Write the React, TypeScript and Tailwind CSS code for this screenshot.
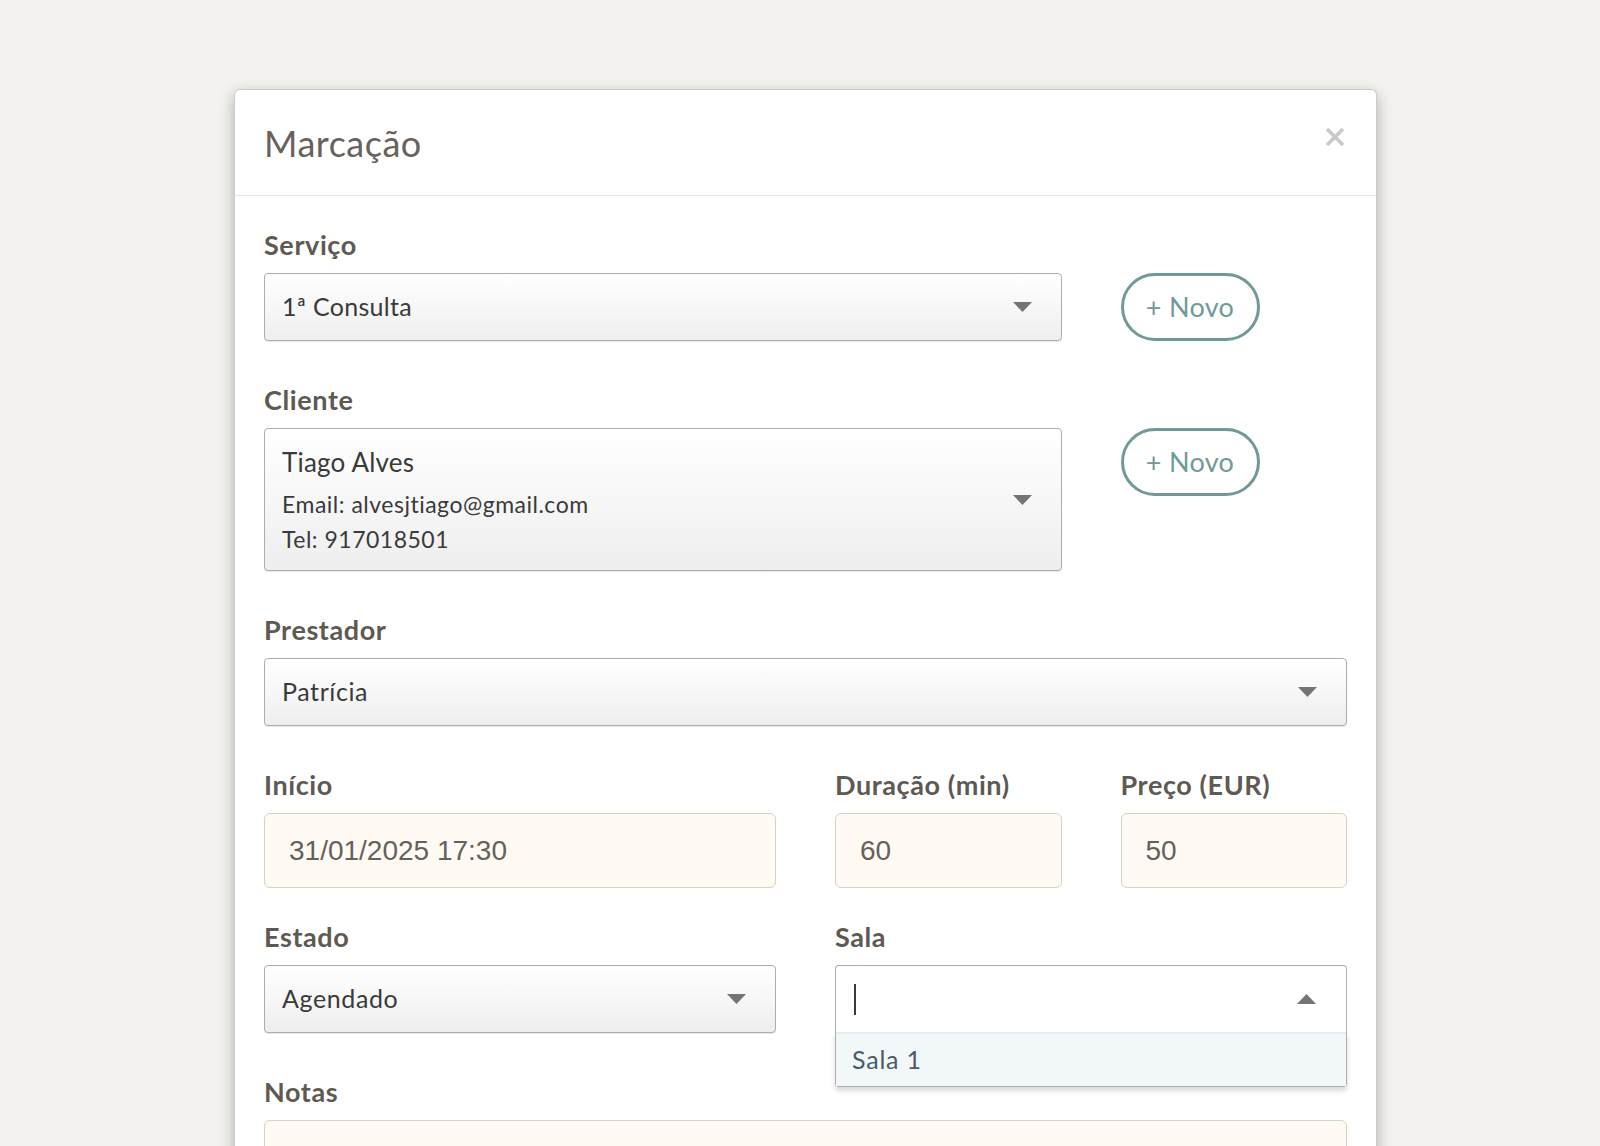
import React from "react";

function Caret({ up = false }: { up?: boolean }) {
  return (
    <svg width="19" height="10" viewBox="0 0 19 10" className="shrink-0">
      <path d={up ? "M0 10 L9.5 0 L19 10 Z" : "M0 0 L19 0 L9.5 10 Z"} fill="#747474" />
    </svg>
  );
}

function Label({ children }: { children: React.ReactNode }) {
  return (
    <div className="text-[27px] leading-[30px] font-bold tracking-[0.6px] text-[#5e5953] mb-[13px]">
      {children}
    </div>
  );
}

const selectCls =
  "flex items-center justify-between rounded-[4px] border border-[#adadad] bg-linear-to-b from-white via-[#f7f7f7] to-[#eeeeee] shadow-[0_1px_1px_rgba(0,0,0,0.1)] pl-[17px] pr-[29px] text-[#3a3a3a]";

const inputCls =
  "h-[75px] rounded-[6px] border border-[#d9d1c3] bg-[#fffbf4] pl-[24px] flex items-center text-[28px] text-[#66615b] font-['Liberation_Sans',Arial,sans-serif]";

function NovoButton() {
  return (
    <button className="h-[68px] w-[139px] rounded-full border-[3px] border-[#6f9a99] text-[#6f9a99] text-[27px] tracking-[0.3px] flex items-center justify-center bg-white">
      + Novo
    </button>
  );
}

export default function App() {
  return (
    <div className="h-[1146px] overflow-hidden bg-[#f3f2ee] pt-[89px] font-['Lato',sans-serif]">
      <div className="ml-[234px] w-[1143px] h-[1120px] bg-white border border-black/20 rounded-[6px] shadow-[0_5px_15px_rgba(0,0,0,0.28)]">
        {/* Header */}
        <div className="h-[106px] border-b border-[#e5e5e5] flex justify-between pl-[29px] pr-[31px]">
          <div className="self-center text-[36px] tracking-[0.5px] text-[#67625c]">Marcação</div>
          <svg width="20" height="20" viewBox="0 0 20 20" className="mt-[37px]">
            <path d="M2 2 L18 18 M18 2 L2 18" stroke="#c9c9c9" strokeWidth="3.6" strokeLinecap="butt" />
          </svg>
        </div>

        {/* Body */}
        <div className="px-[29px] pt-[34px]">
          {/* Serviço */}
          <div className="grid grid-cols-4 gap-x-[59px] mb-[44px]">
            <div className="col-span-3">
              <Label>Serviço</Label>
              <div className={selectCls + " h-[68px] text-[25px] tracking-[0.3px]"}>
                <span>1ª Consulta</span>
                <Caret />
              </div>
            </div>
            <div className="pt-[43px]">
              <NovoButton />
            </div>
          </div>

          {/* Cliente */}
          <div className="grid grid-cols-4 gap-x-[59px] mb-[44px]">
            <div className="col-span-3">
              <Label>Cliente</Label>
              <div className={selectCls + " h-[143px]"}>
                <div className="flex flex-col">
                  <span className="text-[26px] leading-[30px] tracking-[0.2px]">Tiago Alves</span>
                  <span className="text-[23px] leading-[27px] mt-[14px] tracking-[0.5px]">
                    Email: alvesjtiago@gmail.com
                  </span>
                  <span className="text-[23px] leading-[27px] mt-[8px] tracking-[0.5px]">Tel: 917018501</span>
                </div>
                <Caret />
              </div>
            </div>
            <div className="pt-[43px]">
              <NovoButton />
            </div>
          </div>

          {/* Prestador */}
          <div className="mb-[44px]">
            <Label>Prestador</Label>
            <div className={selectCls + " h-[68px] text-[25px] tracking-[0.6px]"}>
              <span>Patrícia</span>
              <Caret />
            </div>
          </div>

          {/* Início / Duração / Preço */}
          <div className="grid grid-cols-4 gap-x-[59px] mb-[34px]">
            <div className="col-span-2">
              <Label>Início</Label>
              <div className={inputCls}>31/01/2025 17:30</div>
            </div>
            <div>
              <Label>Duração (min)</Label>
              <div className={inputCls}>60</div>
            </div>
            <div>
              <Label>Preço (EUR)</Label>
              <div className={inputCls}>50</div>
            </div>
          </div>

          {/* Estado / Sala */}
          <div className="grid grid-cols-4 gap-x-[59px] mb-[44px]">
            <div className="col-span-2">
              <Label>Estado</Label>
              <div className={selectCls + " h-[68px] text-[25px] tracking-[0.6px]"}>
                <span>Agendado</span>
                <Caret />
              </div>
            </div>
            <div className="col-span-2">
              <Label>Sala</Label>
              <div className="relative">
                <div className="h-[67px] rounded-t-[4px] border border-[#adadad] border-b-0 bg-white flex items-center justify-between pl-[18px] pr-[30px]">
                  <span className="block w-[2px] h-[31px] bg-[#3a3a3a]" />
                  <Caret up />
                </div>
                <div className="absolute left-0 right-0 top-[67px] z-10 border border-t-0 border-[#adadad] bg-white rounded-b-[4px] shadow-[0_4px_5px_rgba(0,0,0,0.15)]">
                  <div className="h-[54px] border-t-2 border-[#ececec] bg-[#f2f7fa] pl-[16px] flex items-center text-[25px] tracking-[0.8px] text-[#4b5a68]">
                    Sala 1
                  </div>
                </div>
              </div>
            </div>
          </div>

          {/* Notas */}
          <div>
            <Label>Notas</Label>
            <div className="h-[120px] rounded-[6px] border border-[#d9d1c3] bg-[#fffbf4]" />
          </div>
        </div>
      </div>
    </div>
  );
}
